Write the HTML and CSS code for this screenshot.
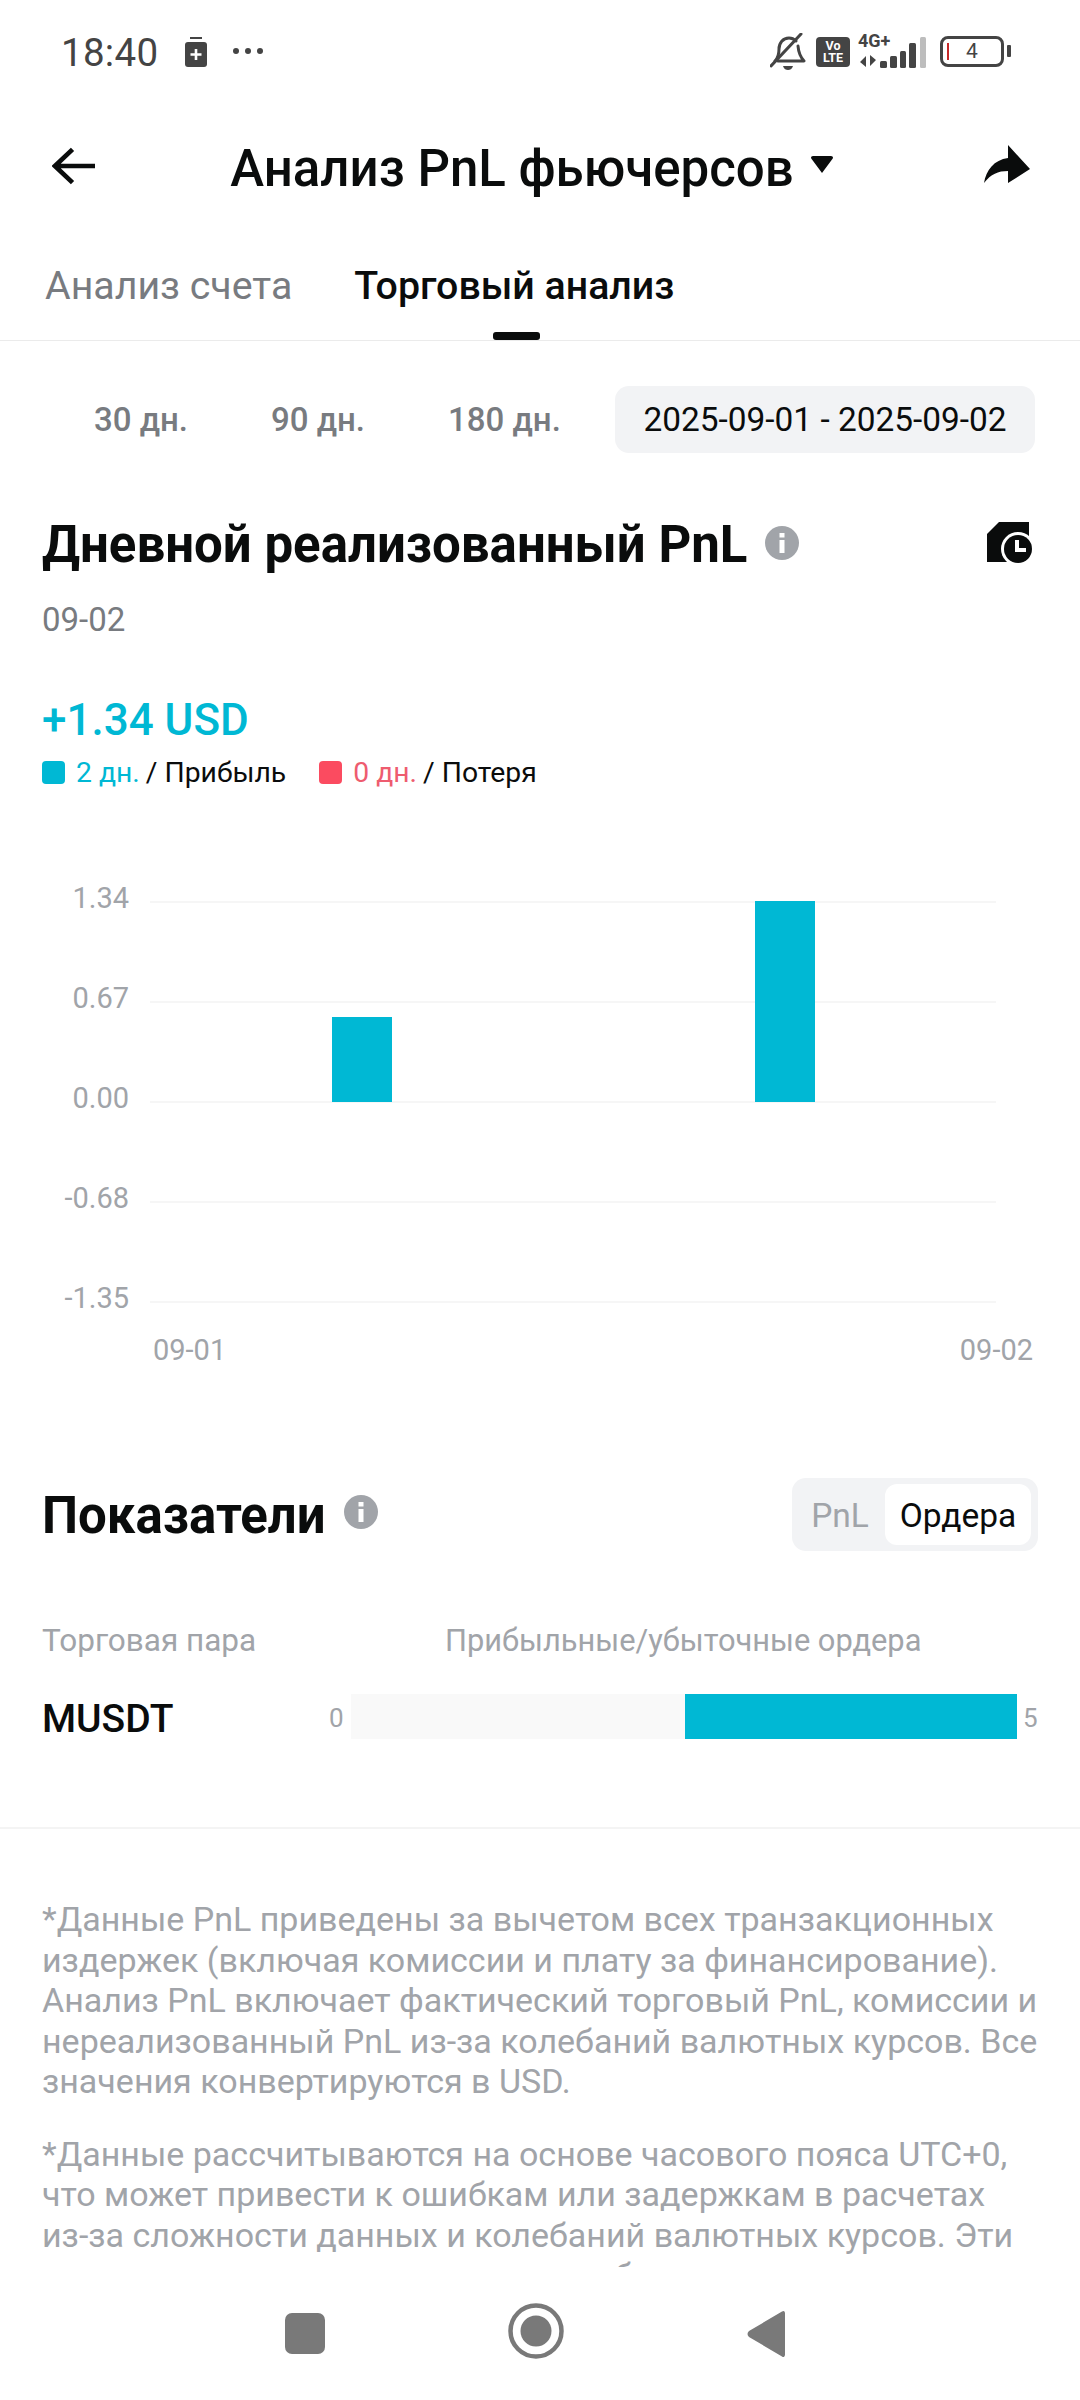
FILE: index.html
```html
<!DOCTYPE html>
<html lang="ru">
<head>
<meta charset="utf-8">
<title>Анализ PnL фьючерсов</title>
<link rel="stylesheet" href="styles.css">
</head>
<body>
<div class="screen">
  <header class="status">
    <div class="status-left">
      <span class="time">18:40</span>
      <svg class="ic-batt-saver" viewBox="0 0 24 30"><rect x="6" y="0" width="12" height="2" fill="#444"/><rect x="1" y="5" width="22" height="25" rx="3" fill="#444"/><path d="M12 12v11M6.5 17.500h11" stroke="#fff" stroke-width="2.600"/></svg>
      <svg class="ic-dots" viewBox="0 0 32 8"><circle cx="4" cy="4" r="3" fill="#444"/><circle cx="16" cy="4" r="3" fill="#444"/><circle cx="28" cy="4" r="3" fill="#444"/></svg>
    </div>
    <div class="status-right">
      <svg class="ic-bell" viewBox="0 0 36 38"><path d="M5 28c3-3 4-6 4-12 0-6 4-11 10-11 3 0 5 1 7 3M28 13c.5 6 1.500 10 6 15H8" fill="none" stroke="#444" stroke-width="3" stroke-linejoin="round" stroke-linecap="round"/><path d="M1 33 31 1" stroke="#444" stroke-width="3" stroke-linecap="round"/><path d="M13 33h10c-1 3-3 4-5 4s-4-1-5-4z" fill="#444"/></svg>
      <span class="volte">Vo<br>LTE</span>
      <div class="net">
        <span class="net-label">4G+</span>
        <svg class="ic-signal" viewBox="0 0 70 31"><path d="M8 19v11L2 25zM12 18v11l6-6z" fill="#444"/><rect x="22" y="24" width="7" height="7" rx="1.500" fill="#444"/><rect x="32" y="19" width="7" height="12" rx="1.500" fill="#444"/><rect x="42" y="14" width="6" height="17" rx="1.500" fill="#444"/><rect x="51" y="6" width="7" height="25" rx="1.500" fill="#444"/><rect x="62" y="0" width="6" height="31" rx="1.500" fill="#bdbdbd"/></svg>
      </div>
      <div class="battery">
        <span class="batt-level"></span>
        <span class="batt-num">4</span>
        <span class="batt-nub"></span>
      </div>
    </div>
  </header>

  <nav class="topbar">
    <svg class="ic-back" viewBox="0 0 44 38"><path d="M44 19H3M21 2 3 19l18 17" fill="none" stroke="#0a0c0c" stroke-width="4.800"/></svg>
    <div class="title-wrap">
      <h1 class="title">Анализ PnL фьючерсов</h1>
      <svg class="ic-caret" viewBox="0 0 22 17"><path d="M0 1.500Q0 0 2 0h18q2 0 2 1.500 0 1-1 2L11 17 1 3.500q-1-1-1-2z" fill="#0a0c0c"/></svg>
    </div>
    <svg class="ic-share" viewBox="0 0 46 38"><path d="M46 24 24 0v13C10 15 2 25 0 38c7-9 14-12 24-12v12z" fill="#0a0c0c"/></svg>
  </nav>

  <div class="tabs">
    <span class="tab">Анализ счета</span>
    <span class="tab tab-active">Торговый анализ</span>
  </div>

  <div class="ranges">
    <span class="range r30">30 дн.</span>
    <span class="range r90">90 дн.</span>
    <span class="range r180">180 дн.</span>
    <span class="range-pill">2025-09-01 - 2025-09-02</span>
  </div>

  <main class="content">
    <section class="daily">
      <div class="heading-row">
        <h2 class="heading">Дневной реализованный PnL</h2>
        <svg class="ic-info" viewBox="0 0 34 34"><circle cx="17" cy="17" r="17" fill="#a1a4a9"/><rect x="14.500" y="14" width="5" height="13" fill="#fff"/><rect x="14.500" y="7" width="5" height="4.500" fill="#fff"/></svg>
        <svg class="ic-history" viewBox="0 0 46 42"><path d="M12 0h30v40H0V12z" fill="#0a0c0c"/><circle cx="31" cy="27" r="17" fill="#fff"/><circle cx="31" cy="27" r="14" fill="#0a0c0c"/><path d="M30 18v10h9" fill="none" stroke="#fff" stroke-width="4"/></svg>
      </div>
      <div class="date">09-02</div>
      <div class="total">+1.34 USD</div>
      <div class="legend">
        <span class="dot dot-up"></span><span class="up">2 дн.</span><span class="legend-text">/ Прибыль</span>
        <span class="dot dot-down"></span><span class="down">0 дн.</span><span class="legend-text">/ Потеря</span>
      </div>
    </section>

    <section class="chart">
      <div class="grid-row"><span class="y">1.34</span><span class="line"></span></div>
      <div class="grid-row"><span class="y">0.67</span><span class="line"></span></div>
      <div class="grid-row"><span class="y">0.00</span><span class="line"></span></div>
      <div class="grid-row"><span class="y">-0.68</span><span class="line"></span></div>
      <div class="grid-row"><span class="y">-1.35</span><span class="line"></span></div>
      <span class="bar bar-a"></span>
      <span class="bar bar-b"></span>
      <div class="x-axis"><span>09-01</span><span>09-02</span></div>
    </section>

    <section class="metrics">
      <div class="metrics-head">
        <h2 class="heading heading-metrics">Показатели</h2>
        <svg class="ic-info" viewBox="0 0 34 34"><circle cx="17" cy="17" r="17" fill="#a1a4a9"/><rect x="14.500" y="14" width="5" height="13" fill="#fff"/><rect x="14.500" y="7" width="5" height="4.500" fill="#fff"/></svg>
        <div class="segment">
          <span class="seg">PnL</span>
          <span class="seg seg-on">Ордера</span>
        </div>
      </div>
      <div class="table-head">
        <span class="col-pair">Торговая пара</span>
        <span class="col-orders">Прибыльные/убыточные ордера</span>
      </div>
      <div class="table-row">
        <span class="pair">MUSDT</span>
        <span class="count count-l">0</span>
        <div class="track"><span class="track-fill"></span></div>
        <span class="count count-r">5</span>
      </div>
    </section>

    <section class="notes">
      <p class="note">*Данные PnL приведены за вычетом всех транзакционных издержек (включая комиссии и плату за финансирование). Анализ PnL включает фактический торговый PnL, комиссии и нереализованный PnL из-за колебаний валютных курсов. Все значения конвертируются в USD.</p>
      <p class="note">*Данные рассчитываются на основе часового пояса UTC+0, что может привести к ошибкам или задержкам в расчетах <span class="nowrap">из-за</span> сложности данных и колебаний валютных курсов. Эти данные предоставлены лишь для общего сведения</p>
    </section>
  </main>

  <footer class="sysnav">
    <svg class="nav-square" viewBox="0 0 40 41"><rect width="40" height="41" rx="7" fill="#797979"/></svg>
    <svg class="nav-home" viewBox="0 0 56 56"><circle cx="28" cy="28" r="25.500" fill="none" stroke="#797979" stroke-width="4.500"/><circle cx="28" cy="28" r="15.500" fill="#797979"/></svg>
    <svg class="nav-back" viewBox="0 0 38 48"><path d="M35 1.500c2-1.500 3 0 3 2v41c0 2-1.500 3.500-3 2L2 27c-2-2-2-4 0-6z" fill="#797979"/></svg>
  </footer>
</div>
</body>
</html>
```

FILE: styles.css
```css
* { box-sizing: border-box; margin: 0; padding: 0; }
html, body { width: 1080px; height: 2400px; background: #fff; overflow: hidden; }
body { font-family: Roboto, "Noto Sans", sans-serif; color: #0a0c0c; }
.screen { width: 1080px; height: 2400px; display: flex; flex-direction: column; background: #fff; }

.status { height: 105px; flex: none; display: flex; justify-content: space-between; align-items: flex-start; padding: 30px 69px 0 61px; color: #444; }
.status-left { display: flex; align-items: flex-start; }
.time { font-size: 38.500px; line-height: 46px; letter-spacing: .3px; }
.ic-batt-saver { width: 24px; height: 30px; margin: 7px 0 0 26px; }
.ic-dots { width: 32px; height: 8px; margin: 17px 0 0 24px; }
.status-right { display: flex; align-items: flex-start; }
.ic-bell { width: 36px; height: 38px; margin-top: 3px; }
.volte { width: 34px; height: 30px; margin: 7px 0 0 10px; background: #444; border-radius: 4px; color: #fff; font-size: 12.500px; line-height: 12px; font-weight: 700; text-align: center; padding-top: 3px; }
.net { position: relative; width: 70px; height: 34px; margin: 3px 0 0 8px; }
.net-label { position: absolute; left: 0; top: -1px; font-size: 18px; line-height: 18px; font-weight: 700; }
.ic-signal { position: absolute; left: 0; top: 4px; width: 70px; height: 31px; }
.battery { position: relative; width: 64px; height: 31px; margin: 6px 7px 0 12px; border: 3px solid #444; border-radius: 8px; display: flex; align-items: center; justify-content: center; }
.batt-level { position: absolute; left: 4px; top: 4px; width: 2px; height: 17px; background: #c62828; }
.batt-num { font-size: 21px; line-height: 25px; color: #444; }
.batt-nub { position: absolute; right: -10px; top: 6px; width: 4px; height: 12px; background: #444; border-radius: 1px; }

.topbar { position: relative; height: 130px; flex: none; display: flex; align-items: center; justify-content: space-between; padding: 0 50px 0 52px; }
.ic-back { width: 43px; height: 38px; margin-bottom: 8px; }
.title-wrap { display: flex; align-items: center; margin-right: 16px; }
.title { font-size: 51px; line-height: 60px; font-weight: 500; white-space: nowrap; margin-bottom: 2px; }
.ic-caret { width: 22px; height: 17px; margin: -12px 0 0 17px; }
.ic-share { width: 46px; height: 38px; margin-bottom: 13px; }

.tabs { height: 106px; flex: none; display: flex; gap: 62px; padding: 0 0 0 45px; border-bottom: 1px solid #ebebeb; }
.tab { position: relative; font-size: 39.300px; line-height: 48px; color: #787b80; padding-top: 27px; white-space: nowrap; }
.tab-active { color: #0a0c0c; font-weight: 500; }
.tab-active::after { content: ""; position: absolute; left: 139px; top: 97px; width: 47px; height: 8px; background: #0a0c0c; border-radius: 3px; }

.ranges { height: 67px; flex: none; margin-top: 45px; display: flex; align-items: center; position: relative; }
.range { font-size: 33px; line-height: 40px; color: #787b80; font-weight: 500; white-space: nowrap; }
.r30 { margin-left: 94px; }
.r90 { margin-left: 83px; }
.r180 { margin-left: 83px; }
.range-pill { margin: 0 45px 0 auto; width: 420px; height: 67px; background: #f2f3f5; border-radius: 14px; display: flex; align-items: center; justify-content: center; font-size: 33.400px; color: #0a0c0c; white-space: nowrap; }

.content { flex: 1; min-height: 0; overflow: hidden; }

.daily { padding: 0 42px; }
.heading-row { display: flex; align-items: center; height: 64px; margin-top: 60px; position: relative; }
.heading { font-size: 51px; line-height: 64px; font-weight: 700; white-space: nowrap; }
.ic-info { width: 34px; height: 34px; flex: none; margin: -4px 0 0 18px; }
.ic-history { width: 46px; height: 42px; margin: -4px 5px 0 auto; }
.date { font-size: 33px; line-height: 40px; color: #787b80; margin-top: 23px; }
.total { font-size: 44px; line-height: 50px; font-weight: 500; color: #00b8d4; margin-top: 55px; }
.legend { display: flex; align-items: center; height: 30px; margin-top: 12px; font-size: 28.300px; }
.dot { width: 23px; height: 23px; border-radius: 4px; margin-right: 11px; flex: none; }
.dot-up { background: #00b8d4; }
.dot-down { background: #fb4b60; margin-left: 33px; }
.up { color: #00b8d4; margin-right: 6px; }
.down { color: #ee5c6f; margin-right: 6px; }
.legend-text { color: #0a0c0c; white-space: nowrap; }

.chart { position: relative; height: 460px; margin-top: 114px; }
.grid-row { height: 100px; display: flex; align-items: flex-start; }
.y { width: 129px; text-align: right; font-size: 29px; line-height: 34px; color: #a1a4a9; margin-top: -20px; flex: none; }
.line { width: 846px; height: 2px; background: #f6f6f6; margin-left: 21px; }
.bar { position: absolute; background: #00b8d4; }
.bar-a { left: 332px; width: 60px; top: 116px; height: 85px; }
.bar-b { left: 755px; width: 60px; top: 0; height: 201px; }
.x-axis { position: absolute; left: 153px; right: 0; top: 432px; display: flex; justify-content: space-between; padding-right: 47px; font-size: 29px; line-height: 34px; color: #a1a4a9; }

.metrics { padding: 0 42px; margin-top: 116px; }
.metrics-head { display: flex; align-items: center; height: 74px; }
.heading-metrics { padding-top: 4px; }
.segment { margin-left: auto; width: 246px; height: 73px; background: #f2f3f5; border-radius: 14px; display: flex; align-items: center; padding: 6px 7px 6px 3px; font-size: 33.500px; }
.seg { color: #a1a4a9; width: 90px; text-align: center; padding-top: 2px; }
.seg-on { flex: 1; height: 61px; line-height: 59px; background: #fff; border-radius: 12px; color: #0a0c0c; }
.table-head { display: flex; height: 40px; margin-top: 70px; font-size: 31.500px; line-height: 40px; color: #a1a4a9; white-space: nowrap; }
.col-pair { width: 403px; }
.col-orders { font-size: 30.800px; }
.table-row { position: relative; display: flex; align-items: center; height: 45px; margin-top: 33px; }
.pair { font-size: 39px; font-weight: 500; width: 288px; padding-top: 4px; }
.count { font-size: 26px; color: #a1a4a9; padding-top: 3px; }
.count-r { margin-left: 6px; }
.count-l { width: 21px; margin-left: -1px; margin-right: 1px; }
.track { width: 666px; height: 45px; background: #f9f9f9; display: flex; justify-content: flex-end; }
.track-fill { width: 332px; height: 45px; background: #00b8d4; }

.notes { margin-top: 88px; border-top: 2px solid #f4f4f4; padding: 70px 40px 0 42px; }
.note { font-size: 34px; line-height: 40.500px; color: #a1a4a9; margin-bottom: 32px; }
.nowrap { white-space: nowrap; }

.sysnav { position: relative; height: 133px; flex: none; background: #fff; }
.nav-square { position: absolute; left: 285px; top: 46px; width: 40px; height: 41px; }
.nav-home { position: absolute; left: 508px; top: 36px; width: 56px; height: 56px; }
.nav-back { position: absolute; left: 747px; top: 43px; width: 38px; height: 48px; }
```
